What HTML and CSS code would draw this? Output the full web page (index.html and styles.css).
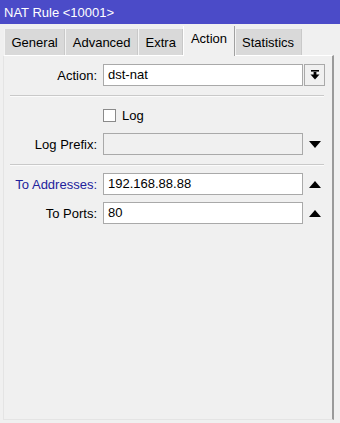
FILE: index.html
```html
<!DOCTYPE html>
<html lang="en">
<head>
    <meta charset="UTF-8">
    <title>NAT Rule &lt;10001&gt;</title>
<link rel="stylesheet" href="styles.css">
</head>
<body>

    <div class="titlebar">NAT Rule &lt;10001&gt;</div>

    <div class="tabs">
        <div class="tab">General</div>
        <div class="tab">Advanced</div>
        <div class="tab">Extra</div>
        <div class="tab active">Action</div>
        <div class="tab">Statistics</div>
    </div>

    <div class="panel">
        <div class="row first">
            <label class="lbl">Action:</label>
            <div class="field">dst-nat</div>
            <div class="dropbtn">
                <svg width="10" height="10" viewBox="0 0 10 10">
                    <rect x="1" y="0" width="8" height="1.6" fill="#000"/>
                    <rect x="3.6" y="2" width="2.8" height="3" fill="#000"/>
                    <polygon points="0.5,4.5 9.5,4.5 5,9.5" fill="#000"/>
                </svg>
            </div>
        </div>

        <div class="sep"></div>

        <div class="row check-row">
            <span class="lbl"></span>
            <span class="checkbox"></span>
            <span class="check-text">Log</span>
        </div>

        <div class="row">
            <label class="lbl">Log Prefix:</label>
            <div class="field disabled"></div>
            <div class="arrow">
                <svg width="12" height="7" viewBox="0 0 12 7"><polygon points="0,0 12,0 6,7" fill="#000"/></svg>
            </div>
        </div>

        <div class="sep"></div>

        <div class="row">
            <label class="lbl blue">To Addresses:</label>
            <div class="field">192.168.88.88</div>
            <div class="arrow">
                <svg width="12" height="7" viewBox="0 0 12 7"><polygon points="0,7 12,7 6,0" fill="#000"/></svg>
            </div>
        </div>

        <div class="row">
            <label class="lbl">To Ports:</label>
            <div class="field">80</div>
            <div class="arrow">
                <svg width="12" height="7" viewBox="0 0 12 7"><polygon points="0,7 12,7 6,0" fill="#000"/></svg>
            </div>
        </div>
    </div>

</body>
</html>
```

FILE: styles.css
```css
/* Basic reset */
* {
    margin: 0;
    padding: 0;
    box-sizing: border-box;
}

body {
    font-family: "Liberation Sans", Arial, sans-serif;
    font-size: 13px;
    background-color: #f0f0f0;
    color: #000;
    width: 340px;
    height: 423px;
    overflow: hidden;
}

.titlebar {
    height: 24px;
    line-height: 25px;
    padding-left: 4px;
    background-color: #4b4bc8;
    color: #fff;
}

.tabs {
    display: flex;
    align-items: flex-end;
    height: 31px;
    padding-left: 4px;
}

.tab {
    height: 26px;
    line-height: 27px;
    padding: 0 6.5px;
    background-color: #d9d9d9;
    border-left: 1px solid #f4f4f4;
    border-right: 1px solid #c9c9c9;
}

.tab.active {
    height: 30px;
    line-height: 26px;
    margin-bottom: -1px;
    background-color: #f0f0f0;
    border-left: 1px solid #fff;
    border-right: 1px solid #a0a0a0;
    position: relative;
    z-index: 1;
}

.panel {
    margin-left: 3px;
    width: 331px;
    height: 365px;
    border-top: 1px solid #fff;
    border-left: 1px solid #e4e4e4;
    border-right: 2px solid #9a9a9a;
    border-bottom: 1px solid #e4e4e4;
}

.row {
    display: flex;
    align-items: center;
    height: 22px;
    margin-top: 7px;
}

.row.first {
    margin-top: 8px;
}

.lbl {
    width: 95px;
    padding-right: 2px;
    text-align: right;
    flex-shrink: 0;
}

.blue {
    color: #22229c;
}

.field {
    margin-left: 4px;
    width: 200px;
    height: 22px;
    line-height: 20px;
    padding-left: 4px;
    background-color: #fff;
    border: 1px solid #a9a9a9;
}

.field.disabled {
    background-color: #f0f0f0;
}

.dropbtn {
    margin-left: 1px;
    width: 21px;
    height: 22px;
    border: 1px solid #a9a9a9;
    display: flex;
    align-items: center;
    justify-content: center;
}

.arrow {
    width: 22px;
    display: flex;
    justify-content: center;
    padding-left: 1px;
}

.sep {
    margin: 9px 0 0 6px;
    width: 314px;
    height: 2px;
    border-top: 1px solid #c9c9c9;
    border-bottom: 1px solid #fbfbfb;
}

.check-row {
    margin-top: 7px;
}

.checkbox {
    margin-left: 4px;
    width: 13px;
    height: 13px;
    background-color: #fff;
    border: 1px solid #8a8a8a;
}

.check-text {
    margin-left: 6px;
}
```
